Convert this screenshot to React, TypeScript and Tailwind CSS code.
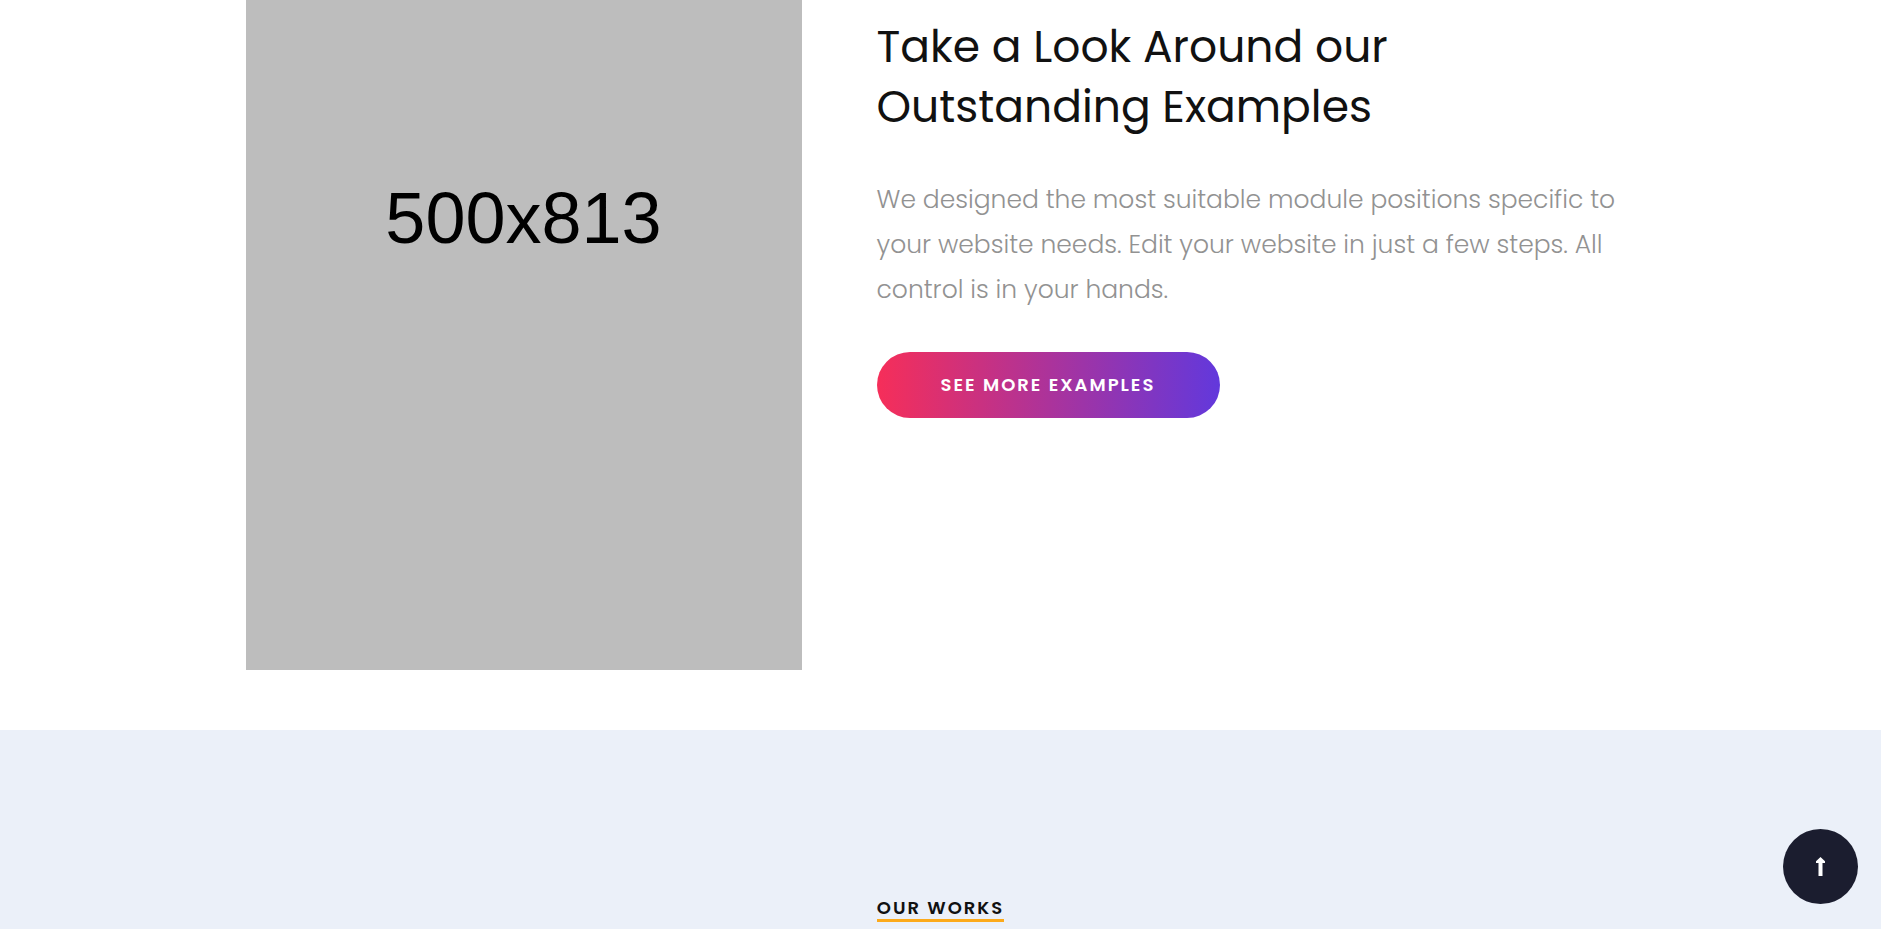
import React from 'react';

const EXAMPLES_TITLE = ['Take a Look Around our', 'Outstanding Examples'];

const EXAMPLES_TEXT = [
  'We designed the most suitable module positions specific to',
  'your website needs. Edit your website in just a few steps. All',
  'control is in your hands.',
];

function ExamplesSection() {
  return (
    <section className="bg-white pb-15 -mt-[234px]">
      <div className="mx-auto flex w-full max-w-[1390px] items-center">
        {/* Placeholder image */}
        <div
          role="img"
          aria-label="500x813"
          className="flex aspect-[500/813] w-2/5 shrink-0 items-center justify-center bg-[#bdbdbd] font-['Liberation_Sans',sans-serif] text-7xl text-black"
        >
          500x813
        </div>

        {/* Text */}
        <div className="min-w-0 flex-1 pb-0.5 pl-[75px]">
          <h2 className="text-[44px] leading-[60px] font-normal text-[#111111]">
            {EXAMPLES_TITLE.map(line => (
              <span key={line} className="block whitespace-nowrap">{line}</span>
            ))}
          </h2>
          <p className="mt-10 text-[25px] leading-[45px] font-light text-[#929292]">
            {EXAMPLES_TEXT.map(line => (
              <span key={line} className="block whitespace-nowrap">{line}</span>
            ))}
          </p>
          <a
            href="#examples"
            className="mt-10 flex h-[66px] w-[343px] items-center justify-center rounded-full bg-[linear-gradient(90deg,#f62e59,#6238dc)] text-lg font-semibold tracking-[2px] text-white"
          >
            SEE MORE EXAMPLES
          </a>
        </div>
      </div>
    </section>
  );
}

function WorksSection() {
  return (
    <section className="flex justify-center bg-[#ebf0f9] pt-[166px] pb-1">
      <h3 className="border-b-3 border-[#fcaa1b] text-lg leading-[23px] font-semibold tracking-[2px] text-[#111111]">
        OUR WORKS
      </h3>
    </section>
  );
}

function ScrollTopButton() {
  return (
    <button
      type="button"
      aria-label="Back to top"
      onClick={() => window.scrollTo({ top: 0, behavior: 'smooth' })}
      className="fixed right-[23px] bottom-[25px] flex size-[75px] items-center justify-center rounded-full bg-[#1b1d2f] text-white"
    >
      <svg width="11" height="19" viewBox="0 0 11 19" fill="currentColor" aria-hidden="true">
        <path d="M5.5 0 L10 4.2 V6 H7.5 V19 H3.5 V6 H1 V4.2 Z" />
      </svg>
    </button>
  );
}

export default function App() {
  return (
    <main className="min-h-screen overflow-hidden bg-[#ebf0f9] font-['Poppins','Inter',sans-serif]">
      <ExamplesSection />
      <WorksSection />
      <ScrollTopButton />
    </main>
  );
}
